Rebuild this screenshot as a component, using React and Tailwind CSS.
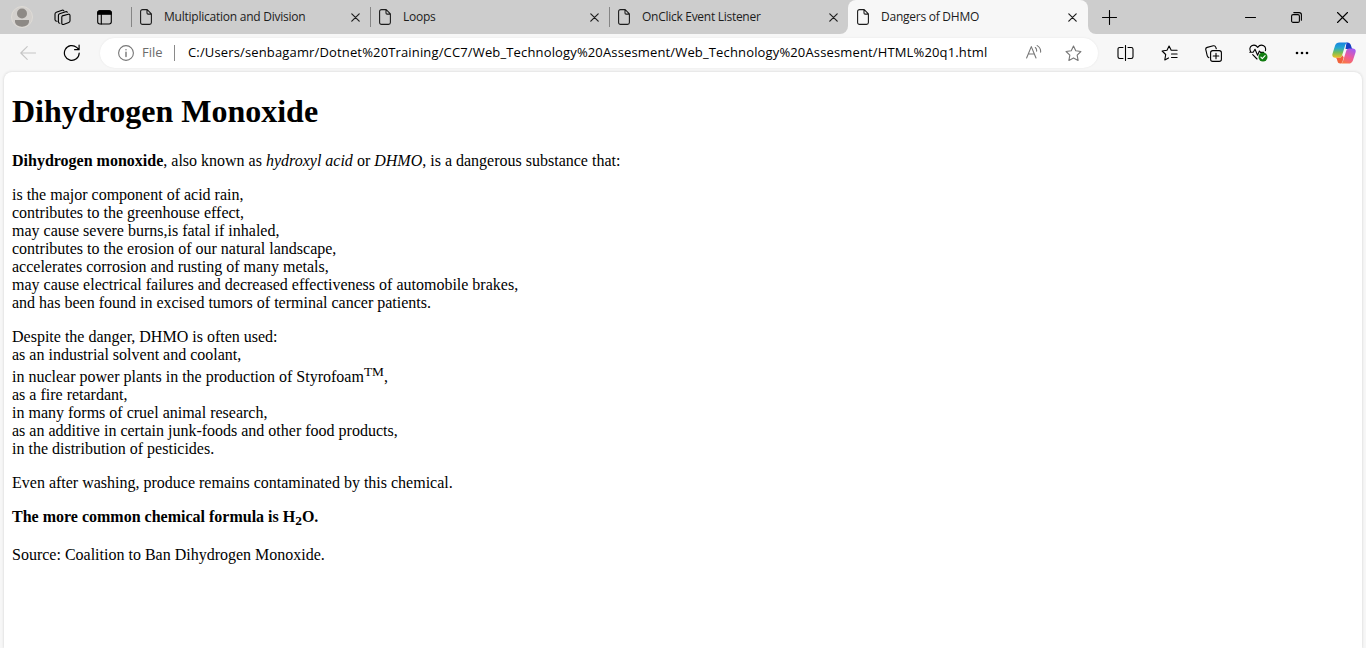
import React from 'react';

const Svg = ({ w = 16, h = 16, className = '', children }) => (
  <svg width={w} height={h} viewBox={`0 0 ${w} ${h}`} fill="none" stroke="currentColor" strokeWidth="1.1" strokeLinecap="round" strokeLinejoin="round" className={`shrink-0 ${className}`}>
    {children}
  </svg>
);

const PageIcon = () => (
  <Svg w={12} h={16}>
    <path d="M2.5.6h4.7l4.2 4.2v8.7c0 1-.8 1.9-1.9 1.9h-7C1.400 15.400.6 14.500.6 13.500V2.500C.6 1.400 1.400.6 2.500.6zM7 .8v3.200c0 .6.500 1.100 1.100 1.100h3.200" />
  </Svg>
);

const CloseIcon = () => (
  <Svg w={9} h={9}>
    <path d="M.8.8l7.400 7.400M8.200.8L.8 8.200" strokeWidth="1.200" />
  </Svg>
);

function TabBody({ title, spacing }) {
  return (
    <>
      <PageIcon />
      <span className={`ml-3 flex-1 whitespace-nowrap ${spacing}`}>{title}</span>
      <CloseIcon />
    </>
  );
}

function Tab({ title, spacing }) {
  return (
    <div className="flex h-[34px] w-[239px] items-center">
      <span className="h-5 w-px bg-[#858585]" />
      <div className="flex flex-1 items-center pr-[10px] pl-2">
        <TabBody title={title} spacing={spacing} />
      </div>
    </div>
  );
}

function TabStrip() {
  return (
    <div className="flex h-[34px] bg-[#f7f7f7] font-['Open_Sans',sans-serif] text-[12px] text-[#1c1c1c]">
      <div className="flex w-[848px] items-center rounded-br-lg bg-[#cdcdcd]">
        <svg width="22" height="22" viewBox="0 0 22 22" className="ml-[11px] shrink-0">
          <circle cx="11" cy="11" r="10.500" fill="#d3d0cd" stroke="#dedbd6" />
          <circle cx="11" cy="7.500" r="5" fill="#8d8985" />
          <path d="M4 14h14v1.500c0 3-3.200 5.200-7 5.200s-7-2.200-7-5.200z" fill="#8d8985" />
        </svg>
        <Svg w={17} h={17} className="ml-[21px] text-black">
          <path d="M8.300 5.400l6-1.700c1-.3 1.700.3 1.700 1.200v5.300c0 .8-.4 1.400-1.200 1.700l-5.300 2c-.9.300-1.700-.2-1.700-1.200V6.800c0-.700.3-1.200.500-1.400z" transform="translate(0 1.500)" />
          <path d="M5.800 14.200c-1 0-1.400-.6-1.400-1.500V6.500c0-.9.400-1.400 1.200-1.700l6-2.100c.8-.3 1.400 0 1.700.6M3 12.200c-1.300 0-2-.5-2-1.500V5c0-.8.500-1.500 1.300-1.800l5.800-2c.9-.3 1.600 0 1.800.6" />
        </Svg>
        <Svg w={15} h={15} className="ml-[26px] text-black">
          <rect x=".7" y=".7" width="13.600" height="13.300" rx="2.200" />
          <path d="M.8 2.800C.8 1.500 1.600.8 2.800.8h9.400c1.200 0 2 .7 2 2V4.300H.8z" fill="currentColor" />
          <path d="M4.300 4v10" />
        </Svg>
        <div className="ml-[19px] flex">
          <Tab title="Multiplication and Division" spacing="tracking-[-0.24px]" />
          <Tab title="Loops" spacing="tracking-[-0.25px]" />
          <Tab title="OnClick Event Listener" spacing="tracking-[-0.28px]" />
        </div>
      </div>
      <div className="w-60 bg-linear-to-b from-[#cdcdcd] from-50% to-[#f7f7f7] to-50%">
        <div className="flex h-[34px] items-center rounded-t-lg bg-[#f7f7f7] pr-[11px] pl-[9px]">
          <TabBody title="Dangers of DHMO" spacing="tracking-[-0.25px]" />
        </div>
      </div>
      <div className="flex flex-1 items-center rounded-bl-lg bg-[#cdcdcd] pr-[18px] pl-[14px] text-black">
        <Svg w={15} h={15}><path d="M7.500.5v14M.5 7.500h14" /></Svg>
        <span className="flex-1" />
        <Svg w={11} h={11}><path d="M.5 5.500h10" /></Svg>
        <Svg w={11} h={11} className="ml-[35px]">
          <rect x=".6" y="2.600" width="7.800" height="7.800" rx="1.500" />
          <path d="M2.800.6h5.400c1.300 0 2.200 1 2.200 2.200v5.400" />
        </Svg>
        <Svg w={11} h={11} className="ml-[35px]"><path d="M.5.5l10 10M10.500.5l-10 10" /></Svg>
      </div>
    </div>
  );
}

function Copilot() {
  return (
    <svg width="24" height="22" viewBox="0 0 24 22" className="shrink-0">
      <defs>
        <linearGradient id="cpA" x1="0" y1="0" x2="0" y2="1">
          <stop offset="0" stopColor="#1683e2" />
          <stop offset=".35" stopColor="#24a8cf" />
          <stop offset=".65" stopColor="#74bd5a" />
          <stop offset="1" stopColor="#f4c020" />
        </linearGradient>
        <linearGradient id="cpB" x1=".7" y1="0" x2=".2" y2="1">
          <stop offset="0" stopColor="#a45cf0" />
          <stop offset=".5" stopColor="#ed5a9c" />
          <stop offset="1" stopColor="#fb7a3e" />
        </linearGradient>
      </defs>
      <path d="M14.500.5h1c1.600 0 2.800.9 3.300 2.500l.9 2.700c.3 1 .9 1.300 1.800 1.300h-8z" fill="#153fc4" />
      <path d="M7.500.5h8.300c-1.500.3-2.200 1.400-2.700 3l-3 9.700c-.5 1.700-1.500 2.600-3.200 2.600H3.300C.8 15.800-.2 14 .5 11.700l2.600-8.200C3.800 1.500 5.200.5 7.500.5z" fill="url(#cpA)" />
      <path d="M3 15.800h4c1.700 0 2.700-1 3.200-2.600l1.500 2-1 3.800c-.5 1.500-1 2.200-2 2.500h-.5c-1.500 0-2.300-.8-2.700-2.200l-.6-2c-.3-1-.9-1.500-1.900-1.500z" fill="#f0633b" />
      <path d="M16.500 21.500H8.700c1.300-.3 2-1.400 2.500-3l2.900-9.300C14.600 7.500 15.600 6.500 17.300 6.500h3.400c2.500 0 3.500 1.600 2.800 3.900l-2.600 8c-.7 2.100-2.100 3.100-4.400 3.100z" fill="url(#cpB)" />
    </svg>
  );
}

function Toolbar() {
  return (
    <div className="flex h-[38px] items-center pr-[10px] pl-5 text-[#1a1a1a]">
      <Svg w={16} h={14} className="mb-px text-[#c5c5c5]"><path d="M15.500 7H.8M7.200.7L.8 7l6.400 6.300" /></Svg>
      <Svg w={18} h={18} className="mr-px ml-[27px] text-black">
        <path d="M16.200 9a7.400 7.400 0 1 1-2.500-5.600L16 5.600M16.100 1.200v4.500h-4.500" strokeWidth="1.200" />
      </Svg>
      <div className="ml-[18px] flex h-[30px] w-[998px] items-center rounded-full bg-white pr-[16px] pl-[18px] shadow-[0_0_2px_#e4e4e4]">
        <Svg w={16} h={16} className="text-[#767676]">
          <circle cx="8" cy="8" r="7.400" />
          <path d="M8 7.200v4.300M8 4.700v.1" strokeWidth="1.400" />
        </Svg>
        <span className="ml-2 w-8 font-['Open_Sans',sans-serif] text-[13px] text-[#6b6b6b]">File</span>
        <span className="h-4 w-px bg-[#8a8a8a]" />
        <span className="ml-[13px] flex-1 font-['Open_Sans',sans-serif] text-[13px] tracking-[0.148px] whitespace-nowrap text-black">
          C:/Users/senbagamr/Dotnet%20Training/CC7/Web_Technology%20Assesment/Web_Technology%20Assesment/HTML%20q1.html
        </span>
        <Svg w={16} h={14} className="mb-0.5 text-[#777]">
          <path d="M.6 13L5.300 1.600 10 13M2.200 9h6.200M9.300 2.500c1 .8 1.500 2 1.300 3.800M11.200.6c2.500 1.500 3.700 3.700 3.400 6.500" />
        </Svg>
        <Svg w={17} h={17} className="ml-[23px] text-[#777]">
          <path d="M8.500 1l2.250 4.800 5.150.7-3.750 3.650.95 5.250-4.600-2.500-4.600 2.500.95-5.250L1.100 6.500l5.150-.7z" />
        </Svg>
      </div>
      <Svg w={17} h={16} className="ml-[19px] text-black">
        <path d="M6 2.500H2.700C1.600 2.500 1 3.200 1 4.200v7.600c0 1 .6 1.700 1.700 1.700H6M11 2.500h3.300c1.100 0 1.700.7 1.700 1.700v7.600c0 1-.6 1.700-1.700 1.700H11M8.500.5v15" />
      </Svg>
      <Svg w={17} h={16} className="ml-[27px] text-black">
        <path d="M10.200 5.300L8.100 1 6 5.300l-4.900.700 3.600 3.500-.9 5.400 3.700-2M10.200 5.300h5.900M10.500 9h5.600M10.500 12.500h5.600" />
      </Svg>
      <Svg w={17} h={17} className="ml-[27px] text-black">
        <path d="M3.900 12.600C2.800 12.300 2.400 11.700 2.200 10.700L.8 4.700C.5 3.500 1.200 2.700 2.200 2.400l6.100-1.600c1.100-.3 2 .2 2.400 1.300l.6 1.700" />
        <rect x="5.600" y="5.600" width="10.800" height="10.800" rx="2.200" />
        <path d="M11 8.200v5.600M8.200 11h5.600" />
      </Svg>
      <Svg w={19} h={18} className="ml-[27px] text-black">
        <path d="M1.800 8C.3 5.500.7 3 2.700 1.800 5 .5 7.200 1.400 8.700 3.300c1.400-1.900 3.700-2.800 6-1.500 1.700 1 2.300 2.800 1.700 4.800M.8 8.300h3.400l1.800-3 2.600 6 1.800-4.300 1.200 1.400h3M3.700 10.600L8 15" />
        <circle cx="14" cy="13" r="4.500" fill="#107c10" stroke="none" />
        <path d="M11.900 13.200l1.400 1.400 2.800-3" stroke="white" />
      </Svg>
      <Svg w={14} h={4} className="ml-[27px] text-black">
        <g fill="currentColor" stroke="none">
          <circle cx="2" cy="2" r="1.300" />
          <circle cx="7" cy="2" r="1.300" />
          <circle cx="12" cy="2" r="1.300" />
        </g>
      </Svg>
      <span className="flex-1" />
      <Copilot />
    </div>
  );
}

function Article() {
  return (
    <main className="mx-1 h-[576px] rounded-t-lg bg-white px-2 pt-[21px] font-['Liberation_Serif',serif] text-[16px] leading-[18px] text-black shadow-[0_0_3px_#cfcfcf]">
      <h1 className="mb-[22px] text-[32px] leading-[37px] font-bold">Dihydrogen Monoxide</h1>
      <p className="mb-4">
        <b>Dihydrogen monoxide</b>, also known as <i>hydroxyl acid</i> or <i>DHMO</i>, is a dangerous substance that:
      </p>
      <p className="mb-4">
        is the major component of acid rain,<br />
        contributes to the greenhouse effect,<br />
        may cause severe burns,is fatal if inhaled,<br />
        contributes to the erosion of our natural landscape,<br />
        accelerates corrosion and rusting of many metals,<br />
        may cause electrical failures and decreased effectiveness of automobile brakes,<br />
        and has been found in excised tumors of terminal cancer patients.
      </p>
      <div className="mb-4">
        <p>Despite the danger, DHMO is often used:</p>
        <p>as an industrial solvent and coolant,</p>
        <p className="pt-1">in nuclear power plants in the production of Styrofoam<sup className="top-[-0.45em] text-[13.33px]">TM</sup>,</p>
        <p>as a fire retardant,</p>
        <p>in many forms of cruel animal research,</p>
        <p>as an additive in certain junk-foods and other food products,</p>
        <p>in the distribution of pesticides.</p>
      </div>
      <p className="mb-4">Even after washing, produce remains contaminated by this chemical.</p>
      <p className="mb-5 font-bold">The more common chemical formula is H<sub className="text-[13.33px]">2</sub>O.</p>
      <p>Source: Coalition to Ban Dihydrogen Monoxide.</p>
    </main>
  );
}

export default function App() {
  return (
    <div className="h-[648px] w-[1366px] overflow-hidden bg-[#f7f7f7]">
      <TabStrip />
      <Toolbar />
      <Article />
    </div>
  );
}
